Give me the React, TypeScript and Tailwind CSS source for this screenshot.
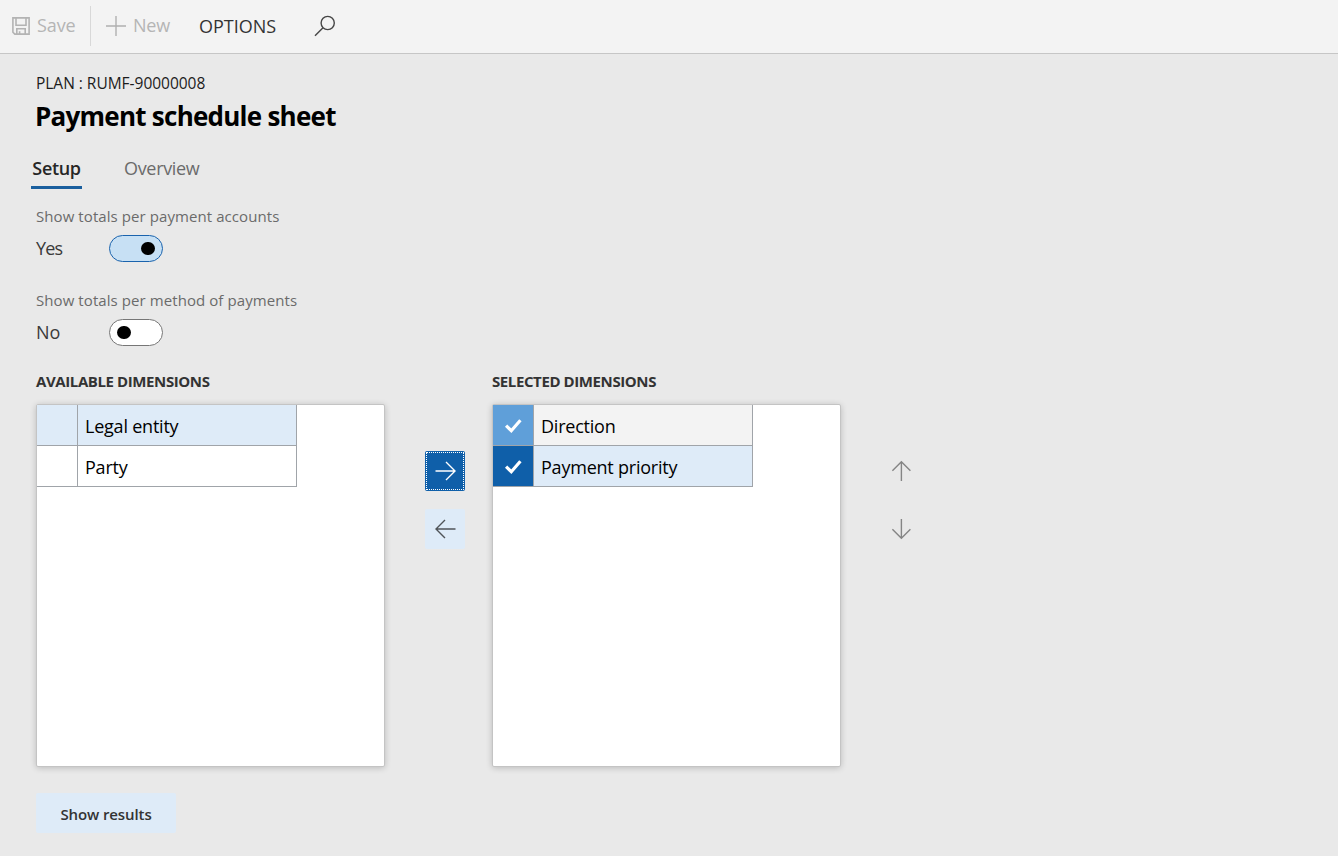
import { useState } from "react";

type IconProps = { className?: string };

function SaveIcon() {
  return (
    <svg className="h-[18px] w-[18px] shrink-0" viewBox="0 0 18 18" fill="none" stroke="#b3b3b3" strokeWidth="1.6">
      <path d="M0.9 0.9H17.1V17.1H2.8L0.9 15.2Z" />
      <path d="M4 1V8.2H14V1" />
      <path d="M4.8 17V11.8H13.2V17M7.6 17V14.2" />
    </svg>
  );
}

function PlusIcon() {
  return (
    <svg className="h-5 w-5 shrink-0" viewBox="0 0 20 20" fill="none" stroke="#b0b0b0" strokeWidth="1.4">
      <path d="M10 0V20M0 10H20" />
    </svg>
  );
}

function SearchIcon() {
  return (
    <svg className="h-[22px] w-[22px]" viewBox="0 0 22 22" fill="none" stroke="#454545" strokeWidth="1.4">
      <circle cx="13.7" cy="8" r="6.6" />
      <path d="M9 12.7L1 20.7" />
    </svg>
  );
}

function ArrowIcon({ className = "" }: IconProps) {
  return (
    <svg className={"h-5 w-[22px] " + className} viewBox="0 0 22 20" fill="none" stroke="currentColor" strokeWidth="1.4">
      <path d="M1.5 10H21M12 1L21 10L12 19" />
    </svg>
  );
}

function MoveIcon({ className = "" }: IconProps) {
  return (
    <svg className={"h-[22px] w-5 " + className} viewBox="0 0 20 22" fill="none" stroke="currentColor" strokeWidth="1.4">
      <path d="M10.4 21V1.8M1.4 10.8L10.4 1.8L19.4 10.8" />
    </svg>
  );
}

function CheckIcon() {
  return (
    <svg className="mt-px h-4 w-[18px]" viewBox="0 0 18 16" fill="none" stroke="white" strokeWidth="3.2">
      <path d="M2.1 7.6L7.3 12.7L16.4 2.3" />
    </svg>
  );
}

function Toggle({ label, on, onToggle }: { label: string; on: boolean; onToggle: () => void }) {
  return (
    <div className="h-[84px]">
      <div className="h-[22px] whitespace-nowrap text-[15px] leading-[22px] tracking-[0.08px] text-[#6b6b6b]">{label}</div>
      <div className="mt-2 flex h-[27px] items-center">
        <span className={"w-[73px] pb-px text-[18px] text-[#3a3a3a] " + (on ? "tracking-[-0.8px]" : "tracking-[0px]")}>{on ? "Yes" : "No"}</span>
        <button
          type="button"
          role="switch"
          aria-checked={on}
          aria-label={label}
          onClick={onToggle}
          className={
            "flex h-[27px] w-[54px] items-center rounded-full border px-[7px] " +
            (on ? "justify-end border-[#1a63ad] bg-[#c7e0f4]" : "justify-start border-[#767676] bg-white")
          }
        >
          <span className="h-[13px] w-[14px] rounded-full bg-black" />
        </button>
      </div>
    </div>
  );
}

type Row = { name: string; mark: string; cell: string; checked?: boolean };

function DimensionList({ title, rows }: { title: string; rows: Row[] }) {
  return (
    <section className="w-[349px]">
      <h2 className="h-[22px] whitespace-nowrap text-[15px] font-bold leading-[21px] tracking-[-0.4px] text-[#333]">{title}</h2>
      <div className="mt-[11px] h-[363px] rounded-[2px] border border-[#c4c4c4] bg-white shadow-[0_1px_6px_rgba(0,0,0,0.2)]">
        {rows.map((row) => (
          <div key={row.name} className="flex h-[41px] w-[260px] border-b border-r border-[#a0a4a9]">
            <div className={"flex w-[41px] items-center justify-center border-r border-[#a0a4a9] " + row.mark}>
              {row.checked && <CheckIcon />}
            </div>
            <div className={"flex flex-1 items-center whitespace-nowrap pl-[7px] pt-[2px] text-[18px] tracking-[-0.22px] text-black " + row.cell}>
              {row.name}
            </div>
          </div>
        ))}
      </div>
    </section>
  );
}

const available: Row[] = [
  { name: "Legal entity", mark: "bg-[#deebf8]", cell: "bg-[#deebf8]" },
  { name: "Party", mark: "bg-white", cell: "bg-white" },
];

const selected: Row[] = [
  { name: "Direction", mark: "bg-[#5f9fd9]", cell: "bg-[#f3f3f3]", checked: true },
  { name: "Payment priority", mark: "bg-[#0f5fa9]", cell: "bg-[#deebf8]", checked: true },
];

export default function App() {
  const [accounts, setAccounts] = useState(true);
  const [methods, setMethods] = useState(false);

  return (
    <div className="h-[856px] w-full overflow-hidden bg-[#e9e9e9] font-['Open_Sans','Noto_Sans',sans-serif]">
      <header className="flex h-[54px] items-center border-b border-[#c6c6c6] bg-[#f3f3f3] pb-[2px] pl-3 text-[18px] text-[#b5b5b5]">
        <button type="button" className="flex w-[78px] items-center gap-[7px] tracking-[-0.1px]">
          <SaveIcon />
          Save
        </button>
        <span className="h-10 w-px bg-[#d8d8d8]" />
        <button type="button" className="ml-[15px] flex w-[93px] items-center gap-[7px] tracking-[-0.2px]">
          <PlusIcon />
          New
        </button>
        <button type="button" className="w-[115px] pt-px text-left tracking-[0px] text-[#333]">OPTIONS</button>
        <button type="button" aria-label="Search">
          <SearchIcon />
        </button>
      </header>

      <main className="px-9 pt-[18px]">
        <div className="h-[22px] whitespace-nowrap text-[15.5px] leading-[22px] tracking-[-0.02px] text-[#1c1c1c]">PLAN : RUMF-90000008</div>
        <h1 className="-ml-px h-[44px] whitespace-nowrap text-[26px] font-bold leading-[44px] tracking-[-0.75px] text-black">Payment schedule sheet</h1>

        <nav className="-ml-[5px] mt-[16px] flex h-[35px] text-[18px] leading-[28px]">
          <button type="button" className="mr-[42px] flex w-[51px] justify-center border-b-[3px] border-[#1a5f9e] font-semibold tracking-[-0.35px] text-[#262626]">Setup</button>
          <button type="button" className="flex pb-[3px] tracking-[-0.32px] text-[#6b6b6b]">Overview</button>
        </nav>

        <div className="pt-[16px]">
          <Toggle label="Show totals per payment accounts" on={accounts} onToggle={() => setAccounts(!accounts)} />
          <Toggle label="Show totals per method of payments" on={methods} onToggle={() => setMethods(!methods)} />
        </div>

        <div className="-mt-[2px] flex">
          <DimensionList title="AVAILABLE DIMENSIONS" rows={available} />
          <div className="ml-10 mr-[27px] flex w-10 flex-col gap-[18px] pt-20">
            <button type="button" aria-label="Add" className="flex h-10 w-10 items-center justify-center rounded-[2px] bg-[#0f5fa9] p-px text-white">
              <span className="flex h-full w-full items-center justify-center border border-dotted border-white">
                <ArrowIcon />
              </span>
            </button>
            <button type="button" aria-label="Remove" className="flex h-10 w-10 items-center justify-center rounded-[2px] bg-[#deebf8] pl-[2px] text-[#505458]">
              <ArrowIcon className="rotate-180" />
            </button>
          </div>
          <DimensionList title="SELECTED DIMENSIONS" rows={selected} />
          <div className="ml-10 flex w-10 flex-col gap-[18px] pt-20 text-[#858585]">
            <button type="button" aria-label="Move up" className="flex h-10 w-10 items-center justify-center">
              <MoveIcon />
            </button>
            <button type="button" aria-label="Move down" className="flex h-10 w-10 items-center justify-center">
              <MoveIcon className="-scale-y-100" />
            </button>
          </div>
        </div>

        <button type="button" className="mt-[26px] flex h-10 w-[140px] items-center justify-center whitespace-nowrap rounded-[2px] bg-[#deebf8] pt-[2px] text-[15px] font-semibold tracking-[-0.1px] text-[#333]">
          Show results
        </button>
      </main>
    </div>
  );
}
